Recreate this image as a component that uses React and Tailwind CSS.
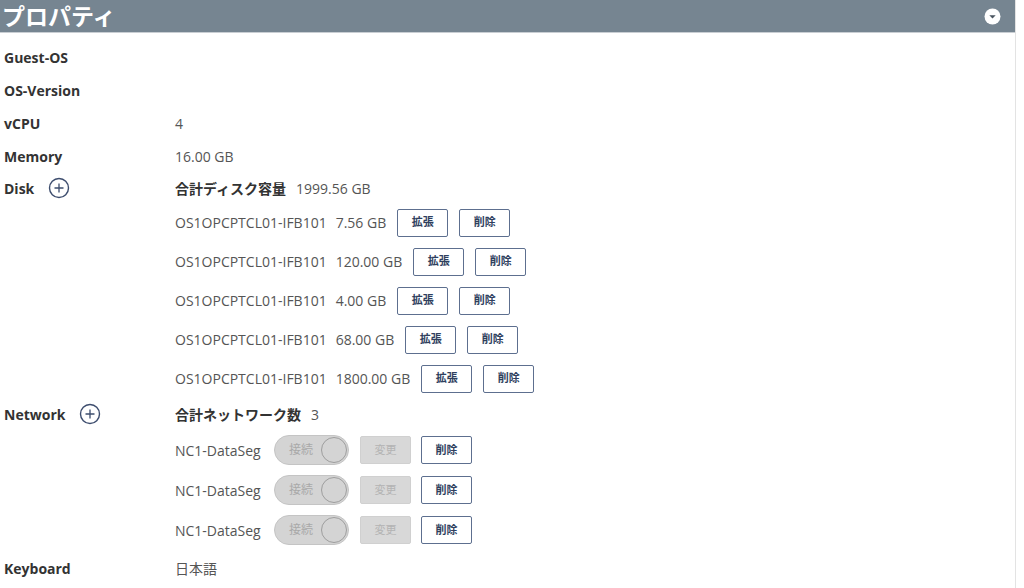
import React from "react";

const font = { fontFamily: '"Open Sans", "Noto Sans CJK JP", sans-serif' };

function PlusCircle() {
  return (
    <svg width="22" height="22" viewBox="0 0 22 22" className="shrink-0">
      <circle cx="11" cy="11" r="9.5" fill="none" stroke="#3d4d6e" strokeWidth="1.4" />
      <path d="M11 6.5v9M6.5 11h9" stroke="#3d4d6e" strokeWidth="1.3" />
    </svg>
  );
}

function Btn({ children }) {
  return (
    <button className="h-[28px] w-[51px] rounded-[2px] border border-[#5d6f8f] bg-white text-[11px] font-bold text-[#2f3f5e] flex items-center justify-center">
      {children}
    </button>
  );
}

const disks = [
  ["7.56 GB"],
  ["120.00 GB"],
  ["4.00 GB"],
  ["68.00 GB"],
  ["1800.00 GB"],
];

function Label({ children, className = "" }) {
  return (
    <div className={"w-[171px] shrink-0 flex items-center gap-[14px] font-bold text-[14px] text-[#333] " + className}>
      {children}
    </div>
  );
}

function Row({ label, value, h = "h-[33px]" }) {
  return (
    <div className={"flex items-center " + h}>
      <Label>{label}</Label>
      <div className="text-[14px] text-[#555]">{value}</div>
    </div>
  );
}

export default function App() {
  return (
    <div className="w-[1024px] h-[588px] overflow-hidden bg-white" style={font}>
      <div className="w-[1016px] h-[588px] border-r border-[#e3e3e3]">
        <div className="h-[33px] bg-[#768591] border-b border-[#c9ced3] flex items-center justify-between pl-[2px] pr-[14px]">
          <div className="text-white text-[23px] font-semibold leading-none">プロパティ</div>
          <svg width="17" height="17" viewBox="0 0 17 17">
            <circle cx="8.5" cy="8.5" r="8" fill="#fff" />
            <path d="M5.3 7.2h6.4L8.5 10.4z" fill="#4a5560" />
          </svg>
        </div>
        <div className="pl-[4px] pt-[8px]">
          <Row label="Guest-OS" value="" />
          <Row label="OS-Version" value="" />
          <Row label="vCPU" value="4" />
          <Row label="Memory" value="16.00 GB" />
          <div className="flex items-center h-[30px]">
            <Label>
              <span>Disk</span>
              <PlusCircle />
            </Label>
            <div className="flex items-center gap-[10px] text-[14px]">
              <span className="font-bold text-[#333]">合計ディスク容量</span>
              <span className="text-[#555]">1999.56 GB</span>
            </div>
          </div>
          {disks.map(([size], i) => (
            <div key={i} className="flex items-center h-[39px]">
              <div className="w-[171px] shrink-0" />
              <div className="flex items-center text-[14px] text-[#555]">
                <span>OS1OPCPTCL01-IFB101</span>
                <span className="ml-[9px]">{size}</span>
                <div className="ml-[11px] flex gap-[11px]">
                  <Btn>拡張</Btn>
                  <Btn>削除</Btn>
                </div>
              </div>
            </div>
          ))}
          <div className="flex items-center h-[32px]">
            <Label>
              <span>Network</span>
              <PlusCircle />
            </Label>
            <div className="flex items-center gap-[10px] text-[14px]">
              <span className="font-bold text-[#333]">合計ネットワーク数</span>
              <span className="text-[#555]">3</span>
            </div>
          </div>
          {[0, 1, 2].map((i) => (
            <div key={i} className="flex items-center h-[40px]">
              <div className="w-[171px] shrink-0" />
              <div className="flex items-center text-[14px] text-[#555]">
                <span className="w-[99px]">NC1-DataSeg</span>
                <div className="h-[30px] w-[75px] rounded-full bg-[#d4d4d4] border border-[#c4c4c4] flex items-center justify-between pl-[14px] pr-[1px]">
                  <span className="text-[12px] text-[#a9a9a9]">接続</span>
                  <div className="h-[26px] w-[26px] rounded-full border border-[#9e9e9e] bg-[#d4d4d4]" />
                </div>
                <div className="ml-[11px] h-[28px] w-[51px] rounded-[2px] bg-[#d8d8d8] border border-[#d0d0d0] flex items-center justify-center text-[11px] text-[#b3b3b3]">
                  変更
                </div>
                <div className="ml-[10px]">
                  <Btn>削除</Btn>
                </div>
              </div>
            </div>
          ))}
          <Row label="Keyboard" value="日本語" h="h-[36px]" />
        </div>
      </div>
    </div>
  );
}
